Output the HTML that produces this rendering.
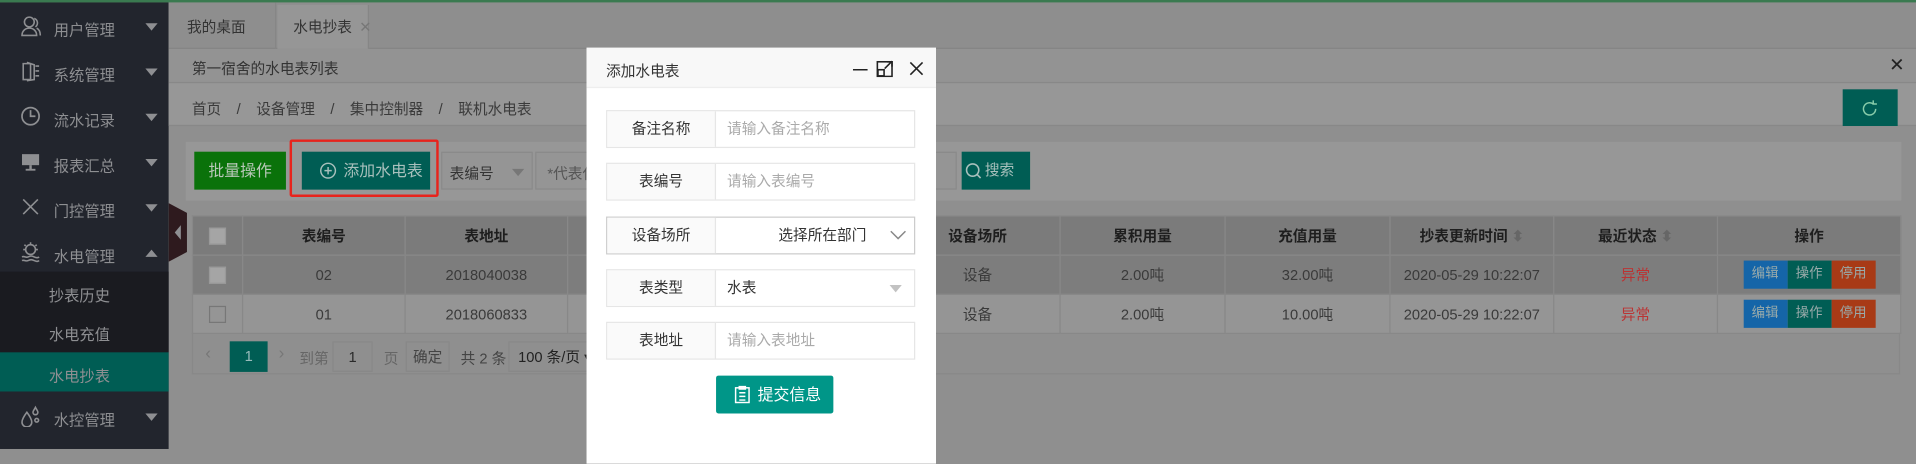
<!DOCTYPE html>
<html><head><meta charset="utf-8"><style>
*{margin:0;padding:0;box-sizing:border-box;white-space:nowrap}
html,body{width:1916px;height:449px;overflow:hidden;background:#8f8f8f}
#w{position:absolute;left:0;top:0;width:1568px;height:367px;transform:scale(1.22194,1.2234);transform-origin:0 0;font-family:"Liberation Sans","Noto Sans CJK SC",sans-serif;font-size:12px;color:#2a2a2a}
.a{position:absolute}
.side{left:0;top:2px;width:138px;height:365px;background:#22252d}
.mi{position:absolute;left:0;width:138px;height:37px;color:#8e8f92;font-size:12.5px}
.mi span{position:absolute;left:44px;top:11px}
.mi i{position:absolute;right:9px;top:16px;width:0;height:0;border-left:5px solid transparent;border-right:5px solid transparent;border-top:6px solid #8e8f92}
.mi svg{position:absolute;left:16px;top:9px}
.sub{position:absolute;left:0;width:138px;height:32px;color:#8e8f92;font-size:12.5px;padding:9px 0 0 40px}
.t{text-align:center}
td,th{border:1px solid #888;text-align:center;font-weight:normal;height:32px;color:#3a3a3a}
th{color:#1e1e1e;font-weight:bold;font-size:12px}
table{border-collapse:collapse;position:absolute;left:157px;top:176px;width:1398px;table-layout:fixed}
.cb{display:inline-block;width:14px;height:14px;background:#a5a5a5;border:1px solid #999;vertical-align:middle}
.ops span{display:inline-block;width:36px;height:23px;line-height:23px;color:#9aa;font-size:11px;vertical-align:middle}
.m{left:480px;top:39px;width:286px;height:340px;background:#fff}
.row{position:absolute;left:496px;width:253px;height:31px;border:1px solid #e6e6e6;background:#fff}
.row .l{position:absolute;left:0;top:0;width:89px;height:29px;background:#fafafa;border-right:1px solid #e6e6e6;text-align:center;line-height:29px;color:#333}
.row .v{position:absolute;left:98px;top:0;line-height:29px;color:#aaa}
</style></head><body><div id="w">
<div class="a" style="left:0;top:0;width:1568px;height:2px;background:#3a7a50"></div>
<div class="a side"></div>
<div class="mi" style="top:3px"><svg width="18" height="18" viewBox="0 0 18 18" fill="none" stroke="#8e8f92" stroke-width="1.3"><circle cx="8" cy="6" r="4"/><path d="M2 17c0-4 3-6 6-6s6 2 6 6z"/><path d="M12 3a4 4 0 0 1 1 7M14 11c2 1 3 3 3 6"/></svg><span>用户管理</span><i></i></div>
<div class="mi" style="top:40px"><svg width="18" height="18" viewBox="0 0 18 18" fill="none" stroke="#8e8f92" stroke-width="1.3"><path d="M3 3h6v13H3zM6 2l6 2v12l-6 1M13 5h3M13 9h3M13 13h3"/></svg><span>系统管理</span><i></i></div>
<div class="mi" style="top:77px"><svg width="18" height="18" viewBox="0 0 18 18" fill="none" stroke="#8e8f92" stroke-width="1.4"><circle cx="9" cy="9" r="7"/><path d="M9 4v5h4"/></svg><span>流水记录</span><i></i></div>
<div class="mi" style="top:114px"><svg width="18" height="18" viewBox="0 0 18 18" fill="#8e8f92"><rect x="2" y="3" width="14" height="9"/><rect x="8" y="12" width="2" height="4"/><rect x="5" y="15" width="8" height="1.5"/></svg><span>报表汇总</span><i></i></div>
<div class="mi" style="top:151px"><svg width="18" height="18" viewBox="0 0 18 18" stroke="#8e8f92" stroke-width="1.3"><path d="M3 3l12 12M15 3L3 15"/></svg><span>门控管理</span><i></i></div>
<div class="mi" style="top:188px"><svg width="18" height="18" viewBox="0 0 18 18" fill="none" stroke="#8e8f92" stroke-width="1.3"><circle cx="9" cy="7" r="4"/><path d="M9 1v2M3 7h2M13 7h2M4 3l1 1M14 3l-1 1M2 13c2-1 3 1 5 0s3-1 5 0 3 1 4 0M2 16c2-1 3 1 5 0s3-1 5 0 3 1 4 0"/></svg><span>水电管理</span><i style="border-top:0;border-bottom:6px solid #8e8f92"></i></div>
<div class="a" style="left:0;top:222px;width:138px;height:66px;background:#1a1b20"></div>
<div class="sub" style="top:222px">抄表历史</div>
<div class="sub" style="top:254px">水电充值</div>
<div class="sub" style="top:288px;background:#005d54;height:32px">水电抄表</div>
<div class="mi" style="top:322px"><svg width="18" height="18" viewBox="0 0 18 18" fill="none" stroke="#8e8f92" stroke-width="1.3"><path d="M6 6c-3 4-4 6-4 8a4 4 0 0 0 8 0c0-2-1-4-4-8zM13 2c-1 2-2 3-2 4a2 2 0 0 0 4 0c0-1-1-2-2-4zM14 11a1.5 1.5 0 1 0 .1 0z"/></svg><span>水控管理</span><i></i></div>
<svg class="a" style="left:138px;top:166px" width="16" height="48" viewBox="0 0 16 48"><path d="M0 0L15 8V40L0 48z" fill="#2e1a1e"/><path d="M10 18L5 24L10 30z" fill="#8e8f92"/></svg>
<div class="a" style="left:138px;top:2px;width:1430px;height:38px;background:#8e8e8e;border-bottom:1px solid #848484"></div>
<div class="a" style="left:140px;top:2px;width:86px;height:38px;border-right:1px solid #868686;color:#333;padding:11px 0 0 13px">我的桌面</div>
<div class="a" style="left:227px;top:4px;width:75px;height:36px;background:#969696;border-right:1px solid #868686;color:#333;padding:9px 0 0 13px">水电抄表<span style="color:#777;margin-left:6px">✕</span></div>
<div class="a" style="left:138px;top:40px;width:1430px;height:28px;background:#939393;border-bottom:1px solid #888;color:#333;padding:7px 0 0 19px">第一宿舍的水电表列表</div>
<div class="a" style="left:1546px;top:44px;font-size:15px;color:#222">✕</div>
<div class="a" style="left:138px;top:68px;width:1430px;height:35px;background:#979797;border-bottom:1px solid #888;color:#3a3a3a;padding:12px 0 0 19px;word-spacing:3px">首页 &nbsp;/ &nbsp;设备管理 &nbsp;/ &nbsp;集中控制器 &nbsp;/ &nbsp;联机水电表</div>
<div class="a" style="left:1508px;top:73px;width:45px;height:30px;background:#005d54"></div>
<svg class="a" style="left:1522px;top:81px" width="16" height="16" viewBox="0 0 16 16" fill="none" stroke="#8ca" stroke-width="1.2"><path d="M13 8a5 5 0 1 1-2-4M11 1v3h3"/></svg>
<div class="a" style="left:152px;top:116px;width:1404px;height:48px;background:#979797"></div>
<div class="a t" style="left:159px;top:124px;width:75px;height:31px;line-height:31px;background:#0a720a;color:#b8c8b8;font-size:13px">批量操作</div>
<div class="a" style="left:237px;top:114px;width:122px;height:47px;border:2px solid #e8231c;border-radius:2px"></div>
<div class="a" style="left:247px;top:124px;width:105px;height:31px;background:#005d54;color:#a8c0bc;font-size:13px;line-height:31px;padding-left:34px">添加水电表</div>
<svg class="a" style="left:261px;top:132px" width="15" height="15" viewBox="0 0 15 15" fill="none" stroke="#a8c0bc" stroke-width="1.2"><circle cx="7.5" cy="7.5" r="6"/><path d="M7.5 4.5v6M4.5 7.5h6"/></svg>
<div class="a" style="left:361px;top:124px;width:75px;height:31px;background:#959595;border:1px solid #8a8a8a;color:#333;padding:8px 0 0 6px">表编号<span style="position:absolute;right:6px;top:13px;border-left:5px solid transparent;border-right:5px solid transparent;border-top:6px solid #777"></span></div>
<div class="a" style="left:438px;top:124px;width:345px;height:31px;background:#959595;border:1px solid #8a8a8a;color:#555;padding:8px 0 0 9px">*代表任意</div>
<div class="a" style="left:787px;top:124px;width:56px;height:31px;background:#005d54;color:#a8c0bc;font-size:12px;line-height:31px;padding-left:19px">搜索</div>
<svg class="a" style="left:789px;top:132px" width="16" height="16" viewBox="0 0 16 16" fill="none" stroke="#a8c0bc" stroke-width="1.3"><circle cx="7" cy="7" r="5"/><path d="M10.5 10.5l3 3"/></svg>
<table>
<colgroup><col style="width:41px"><col style="width:133px"><col style="width:133px"><col style="width:134px"><col style="width:134px"><col style="width:135px"><col style="width:135px"><col style="width:135px"><col style="width:134px"><col style="width:134px"><col style="width:150px"></colgroup>
<tr style="background:#7b7b7b"><th><span class="cb"></span></th><th>表编号</th><th>表地址</th><th></th><th></th><th>设备场所</th><th>累积用量</th><th>充值用量</th><th>抄表更新时间 <span style="color:#666">⬍</span></th><th>最近状态 <span style="color:#666">⬍</span></th><th>操作</th></tr>
<tr style="background:#7d7d7d"><td><span class="cb"></span></td><td>02</td><td>2018040038</td><td></td><td></td><td>设备</td><td>2.00吨</td><td>32.00吨</td><td>2020-05-29 10:22:07</td><td style="color:#b33">异常</td><td class="ops"><span style="background:#1565a8">编辑</span><span style="background:#005d54">操作</span><span style="background:#a83a16">停用</span></td></tr>
<tr style="background:#959595"><td><span class="cb" style="background:#959595;border-color:#777"></span></td><td>01</td><td>2018060833</td><td></td><td></td><td>设备</td><td>2.00吨</td><td>10.00吨</td><td>2020-05-29 10:22:07</td><td style="color:#b33">异常</td><td class="ops"><span style="background:#1565a8">编辑</span><span style="background:#005d54">操作</span><span style="background:#a83a16">停用</span></td></tr>
</table>
<div class="a" style="left:157px;top:272px;width:1398px;height:34px;border:1px solid #888;border-top:0"></div>
<div class="a" style="left:168px;top:280px;color:#777;font-size:14px">‹</div>
<div class="a t" style="left:188px;top:279px;width:31px;height:25px;line-height:25px;background:#005d54;color:#9bb">1</div>
<div class="a" style="left:228px;top:280px;color:#777;font-size:14px">›</div>
<div class="a" style="left:245px;top:284px;color:#666">到第</div>
<div class="a t" style="left:272px;top:279px;width:33px;height:25px;line-height:25px;border:1px solid #888">1</div>
<div class="a" style="left:314px;top:284px;color:#666">页</div>
<div class="a t" style="left:332px;top:279px;width:36px;height:25px;line-height:25px;border:1px solid #888;color:#444">确定</div>
<div class="a" style="left:377px;top:284px;color:#444">共 2 条</div>
<div class="a" style="left:416px;top:279px;width:70px;height:25px;line-height:25px;border:1px solid #888;color:#222;padding-left:7px">100 条/页 ▾</div>
<div class="a m"></div>
<div class="a" style="left:480px;top:39px;width:286px;height:33px;background:#f8f8f8;border-bottom:1px solid #eee;color:#333;padding:10px 0 0 16px">添加水电表</div>
<svg class="a" style="left:698px;top:49px" width="60" height="14" viewBox="0 0 60 14" fill="none" stroke="#222" stroke-width="1.3"><path d="M0 8h12"/><rect x="20" y="1.5" width="12" height="12"/><path d="M26 7l6-6M28 1.5h4v4" /><rect x="20.5" y="8" width="5" height="5"/><path d="M47 2l10 10M57 2L47 12"/></svg>
<div class="row" style="top:90px"><div class="l">备注名称</div><div class="v">请输入备注名称</div></div>
<div class="row" style="top:133px"><div class="l">表编号</div><div class="v">请输入表编号</div></div>
<div class="row" style="top:177px;border-color:#ccc"><div class="l">设备场所</div><div class="v" style="left:140px;color:#333">选择所在部门</div><svg style="position:absolute;right:6px;top:9px" width="14" height="10" viewBox="0 0 14 10" fill="none" stroke="#888" stroke-width="1.2"><path d="M1 2l6 6 6-6"/></svg></div>
<div class="row" style="top:220px"><div class="l">表类型</div><div class="v" style="color:#333">水表</div><span style="position:absolute;right:10px;top:12px;border-left:5px solid transparent;border-right:5px solid transparent;border-top:6px solid #c2c2c2"></span></div>
<div class="row" style="top:263px"><div class="l">表地址</div><div class="v">请输入表地址</div></div>
<div class="a" style="left:586px;top:307px;width:96px;height:31px;background:#009688;border-radius:2px;color:#fff;font-size:13px;line-height:31px;padding-left:34px">提交信息</div>
<svg class="a" style="left:600px;top:315px" width="15" height="15" viewBox="0 0 15 15" fill="none" stroke="#fff" stroke-width="1.2"><rect x="2" y="2" width="11" height="12"/><path d="M5 1h5v2H5zM5 6h5M5 9h5M5 12h5"/></svg>
</div></body></html>
